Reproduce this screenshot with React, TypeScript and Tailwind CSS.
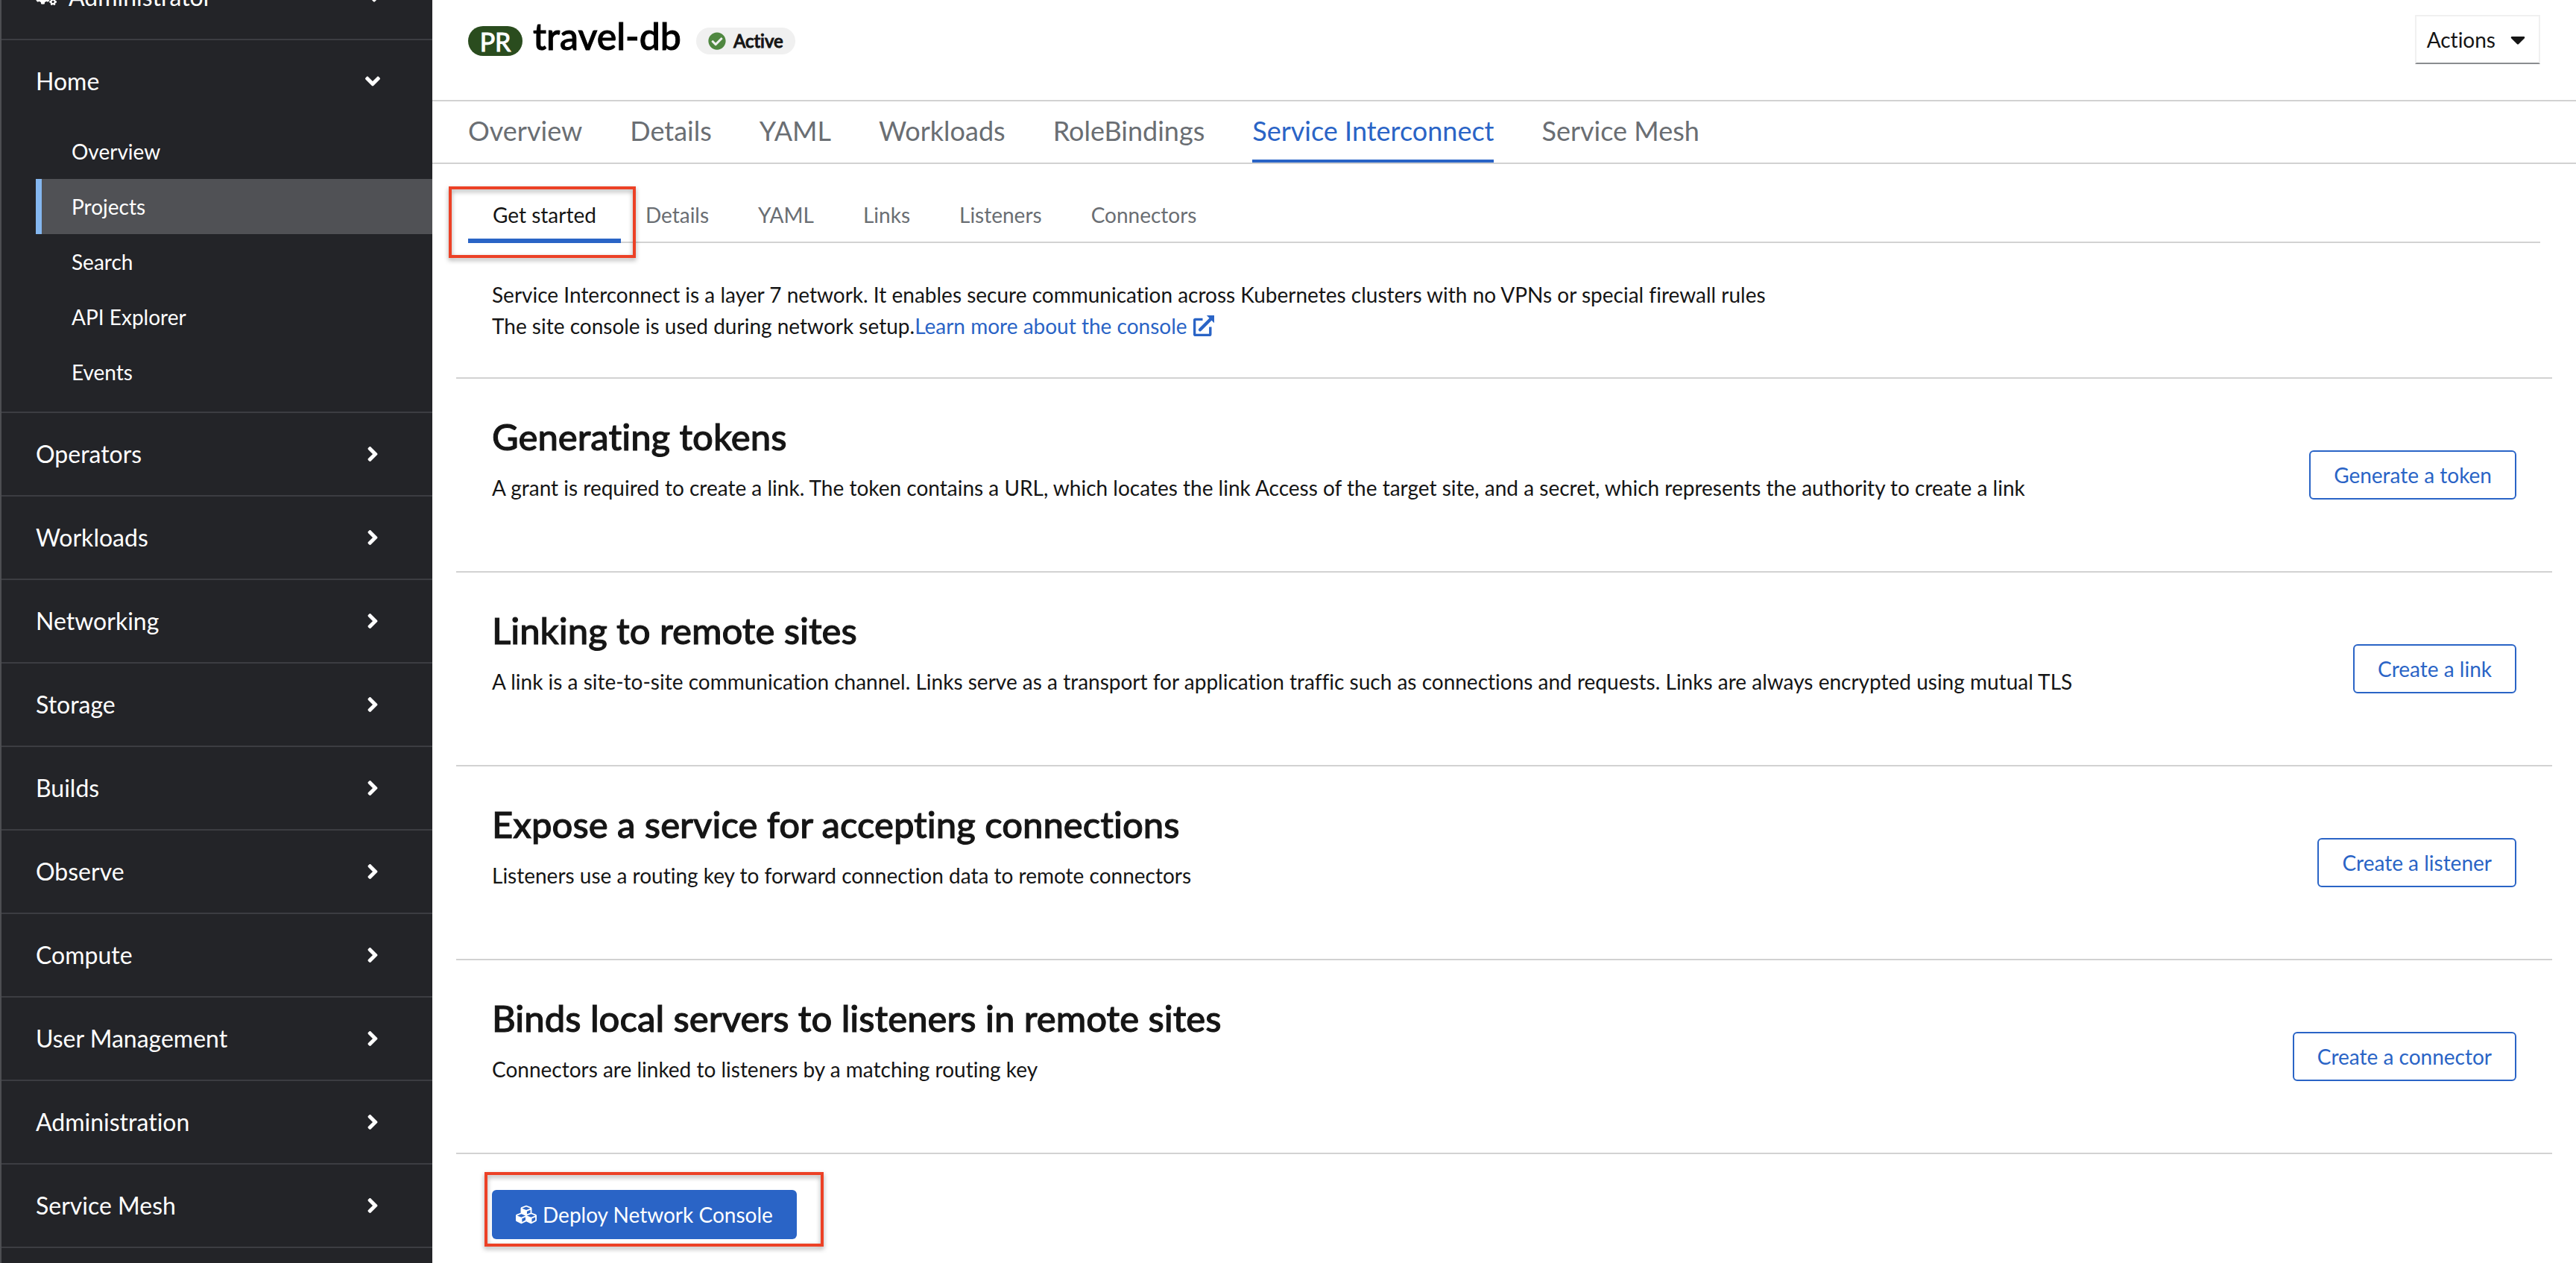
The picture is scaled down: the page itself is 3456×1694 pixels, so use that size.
import React from "react";
import {
  FaAngleDown,
  FaAngleRight,
  FaCaretDown,
  FaCheckCircle,
  FaCogs,
  FaCubes,
} from "react-icons/fa";

const homeItems = ["Overview", "Projects", "Search", "API Explorer", "Events"];

const navSections = [
  "Operators",
  "Workloads",
  "Networking",
  "Storage",
  "Builds",
  "Observe",
  "Compute",
  "User Management",
  "Administration",
  "Service Mesh",
];

const projectTabs = [
  "Overview",
  "Details",
  "YAML",
  "Workloads",
  "RoleBindings",
  "Service Interconnect",
  "Service Mesh",
];

const siteTabs = ["Get started", "Details", "YAML", "Links", "Listeners", "Connectors"];

const steps = [
  {
    title: "Generating tokens",
    text: "A grant is required to create a link. The token contains a URL, which locates the link Access of the target site, and a secret, which represents the authority to create a link",
    action: "Generate a token",
  },
  {
    title: "Linking to remote sites",
    text: "A link is a site-to-site communication channel. Links serve as a transport for application traffic such as connections and requests. Links are always encrypted using mutual TLS",
    action: "Create a link",
  },
  {
    title: "Expose a service for accepting connections",
    text: "Listeners use a routing key to forward connection data to remote connectors",
    action: "Create a listener",
  },
  {
    title: "Binds local servers to listeners in remote sites",
    text: "Connectors are linked to listeners by a matching routing key",
    action: "Create a connector",
  },
];

function ExternalLinkIcon() {
  return (
    <svg viewBox="0 0 28 28" className="ml-2 inline-block size-7 align-[-3px]" aria-hidden="true">
      <path
        d="M12.5 5.4H2.6a1 1 0 0 0-1 1v19a1 1 0 0 0 1 1h19.2a1 1 0 0 0 1-1V15.5"
        fill="none"
        stroke="currentColor"
        strokeWidth="3.4"
      />
      <path d="M9 19.3 23.5 4.8" stroke="currentColor" strokeWidth="4.4" strokeLinecap="round" />
      <path d="M17.8 0H28v10.2z" fill="currentColor" />
    </svg>
  );
}

function Sidebar() {
  return (
    <aside className="w-[580px] shrink-0 overflow-hidden border-l-2 border-[#4d4e52] bg-[#232428] text-[32px] text-white">
      <nav className="-mt-[60px]" aria-label="Main">
        <button type="button" className="flex h-28 w-full items-center pr-[68px] pl-[46px]">
          <FaCogs className="size-7" />
          <span className="ml-4">Administrator</span>
          <FaCaretDown className="ml-auto h-8 w-5" />
        </button>
        <div className="border-y-2 border-[#3c3d42] pb-4">
          <button
            type="button"
            aria-expanded="true"
            className="flex h-28 w-full items-center justify-between pr-[70px] pb-0.5 pl-[46px]"
          >
            Home
            <FaAngleDown className="h-8 w-5" />
          </button>
          <ul className="ml-[46px] text-[28px]">
            {homeItems.map((item) => (
              <li key={item}>
                <a
                  href="#"
                  className={
                    item === "Projects"
                      ? "flex h-[74px] items-center border-l-8 border-[#84b7f0] bg-[#505155] pl-10"
                      : "flex h-[74px] items-center border-l-8 border-transparent pl-10"
                  }
                >
                  {item}
                </a>
              </li>
            ))}
          </ul>
        </div>
        {navSections.map((item) => (
          <button
            key={item}
            type="button"
            aria-expanded="false"
            className="flex h-28 w-full items-center justify-between border-b-2 border-[#3c3d42] pr-[72px] pl-[46px]"
          >
            {item}
            <FaAngleRight className="h-8 w-4" />
          </button>
        ))}
      </nav>
    </aside>
  );
}

function Highlight({ className }: { className: string }) {
  return (
    <span
      aria-hidden="true"
      className={`pointer-events-none absolute border-4 border-[#ec4126] drop-shadow-[0_3px_3px_rgba(0,0,0,0.35)] ${className}`}
    />
  );
}

export default function App() {
  return (
    <div className="flex min-h-screen bg-white font-['Lato',sans-serif] text-[28px] text-[#151515] [font-variant-ligatures:none]">
      <Sidebar />
      <main className="min-w-0 flex-1">
        <header className="flex items-start justify-between border-b-2 border-[#d2d2d2] px-12 pt-5 pb-11">
          <div className="flex items-center">
            <span className="flex h-10 w-[73px] items-center justify-center rounded-full bg-[#2a4c1e] text-[34px] text-white [-webkit-text-stroke:1px]">
              PR
            </span>
            <h1 className="ml-3.5 pb-3.5 text-[50px] leading-[56px] font-medium text-black [-webkit-text-stroke:1px]">
              travel-db
            </h1>
            <span className="ml-5 flex h-9 items-center gap-2.5 rounded-full bg-[#f0f0f0] px-4 text-[24px] font-medium [-webkit-text-stroke:1px]">
              <FaCheckCircle className="size-6 text-[#4f8740]" />
              Active
            </span>
          </div>
          <button
            type="button"
            className="flex h-[66px] items-center border-2 border-[#f0f0f0] border-b-[#8a8d90] pr-[18px] pl-3.5"
          >
            Actions
            <FaCaretDown className="ml-5 h-8 w-5" />
          </button>
        </header>

        <nav className="flex gap-16 border-b-2 border-[#d2d2d2] px-12 text-[36px]" aria-label="Project">
          {projectTabs.map((tab) => (
            <a
              key={tab}
              href="#"
              className={
                tab === "Service Interconnect"
                  ? "flex h-[82px] items-center border-b-4 border-[#2a64c6] text-[#2a64c6]"
                  : "flex h-[82px] items-center border-b-4 border-transparent text-[#6a6e73]"
              }
            >
              {tab}
            </a>
          ))}
        </nav>

        <div className="mx-12 flex pt-9 shadow-[inset_0_-2px_0_#d2d2d2]" role="tablist">
          {siteTabs.map((tab) => (
            <div key={tab} className="relative">
              <button
                type="button"
                role="tab"
                aria-selected={tab === "Get started"}
                className={
                  tab === "Get started"
                    ? "h-[70px] border-b-6 border-[#2a64c6] px-[33px]"
                    : "h-[70px] border-b-6 border-transparent px-[33px] text-[#6a6e73]"
                }
              >
                {tab}
              </button>
              {tab === "Get started" && <Highlight className="-top-1.5 -right-5 -bottom-5 -left-6.5" />}
            </div>
          ))}
        </div>

        <div className="mx-8">
          <p className="px-12 py-12 leading-[42px]">
            Service Interconnect is a layer 7 network. It enables secure communication across Kubernetes clusters
            with no VPNs or special firewall rules
            <br />
            The site console is used during network setup.
            <a href="#" className="text-[#2a64c6]">
              Learn more about the console
              <ExternalLinkIcon />
            </a>
          </p>

          {steps.map((step) => (
            <section
              key={step.title}
              className="flex items-center justify-between border-t-2 border-[#d2d2d2] px-12 py-12"
            >
              <div className="pb-11">
                <h2 className="text-[49px] leading-[58px] font-medium [-webkit-text-stroke:1px]">{step.title}</h2>
                <p className="mt-5 leading-10">{step.text}</p>
              </div>
              <button
                type="button"
                className="h-[66px] shrink-0 rounded-md border-2 border-[#2a64c6] px-[31px] text-[#2a64c6]"
              >
                {step.action}
              </button>
            </section>
          ))}

          <div className="flex border-t-2 border-[#d2d2d2] px-12 pt-12">
            <div className="relative">
              <button
                type="button"
                className="flex h-[66px] items-center gap-2 rounded-md bg-[#2a64c6] px-8 text-white"
              >
                <FaCubes className="size-7" />
                Deploy Network Console
              </button>
              <Highlight className="-top-6 -right-9 -bottom-2.5 -left-2.5" />
            </div>
          </div>
        </div>
      </main>
    </div>
  );
}
